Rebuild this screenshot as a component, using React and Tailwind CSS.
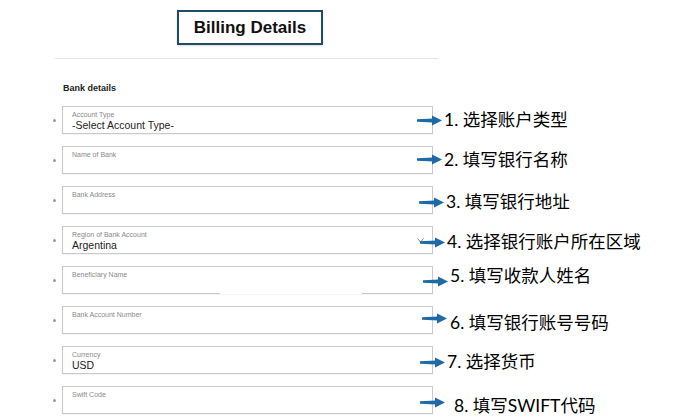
import React from "react";

const fields = [
  { label: "Account Type", value: "-Select Account Type-", note: "1. 选择账户类型", arrow: "ml-[-16px]", arrowY: "", gap: "ml-[2px]", textY: "" },
  { label: "Name of Bank", value: "", note: "2. 填写银行名称", arrow: "ml-[-16px]", arrowY: "-translate-y-[1px]", gap: "ml-[2px]", textY: "" },
  { label: "Bank Address", value: "", note: "3. 填写银行地址", arrow: "ml-[-14px]", arrowY: "translate-y-[2px]", gap: "ml-[2px]", textY: "translate-y-[2px]" },
  { label: "Region of Bank Account", value: "Argentina", note: "4. 选择银行账户所在区域", arrow: "ml-[-13px]", arrowY: "translate-y-[2px]", gap: "ml-[2px]", textY: "translate-y-[2px]", chevron: true },
  { label: "Beneficiary Name", value: "", note: "5. 填写收款人姓名", arrow: "ml-[-10px]", arrowY: "translate-y-[1px]", gap: "ml-[2px]", textY: "-translate-y-[4px]", gapLine: true },
  { label: "Bank Account Number", value: "", note: "6. 填写银行账号号码", arrow: "ml-[-11px]", arrowY: "-translate-y-[2px]", gap: "ml-[3px]", textY: "translate-y-[3px]" },
  { label: "Currency", value: "USD", note: "7. 选择货币", arrow: "ml-[-13px]", arrowY: "translate-y-[2px]", gap: "ml-[2px]", textY: "translate-y-[2px]" },
  { label: "Swift Code", value: "", note: "8. 填写SWIFT代码", arrow: "ml-[-13px]", arrowY: "translate-y-[2px]", gap: "ml-[9px]", textY: "translate-y-[6px]" },
];

function Arrow() {
  return (
    <svg width="25" height="11" viewBox="0 0 25 11">
      <path d="M0 4.2 L16 3.6 L16 7.4 L0 6.8 Z" fill="#1e6aa6" />
      <path d="M15 0.5 L25 5.5 L15 10.5 Z" fill="#1e6aa6" />
    </svg>
  );
}

function Field({ f }) {
  return (
    <div className="flex items-center h-[28px]">
      <div className="w-[9px] flex justify-start">
        <div className="w-[3px] h-[3px] rounded-full bg-[#9a9a9a]"></div>
      </div>
      <div className="relative w-[371px] h-[28px] border border-[#c9c9c9] bg-white pl-[9px] pt-[4px] font-['Liberation_Sans',Arial,sans-serif] shadow-[0_1px_1px_rgba(0,0,0,0.04)]">
        <div className="text-[7px] leading-[8px] text-[#8a8a8a]">{f.label}</div>
        <div className="text-[10.5px] leading-[13px] text-[#222]">{f.value}</div>
        {f.chevron && (
          <svg className="absolute right-[8px] top-[11px]" width="7" height="5" viewBox="0 0 7 5">
            <polyline points="0.5,0.5 3.5,4 6.5,0.5" fill="none" stroke="#8a8a8a" strokeWidth="1" />
          </svg>
        )}
        {f.gapLine && <div className="absolute left-[157px] bottom-[-1px] w-[142px] h-[2px] bg-white"></div>}
      </div>
      <div className={"relative z-10 flex items-center " + f.arrow}>
        <div className={f.arrowY}>
          <Arrow />
        </div>
        <div className={"text-[17.5px] leading-[22px] text-black whitespace-nowrap font-['Lato','Noto_Sans_CJK_SC',sans-serif] " + f.gap + " " + f.textY}>
          {f.note}
        </div>
      </div>
    </div>
  );
}

export default function App() {
  return (
    <div className="w-[700px] h-[419px] bg-white overflow-hidden font-['Liberation_Sans',Arial,sans-serif]">
      <div className="pl-[177px] pt-[10px]">
        <div className="w-[146px] h-[35px] border-2 border-[#1d4c64] flex items-center justify-center text-[17px] font-bold text-[#111] shadow-[0_1px_2px_rgba(0,0,0,0.15)]">
          Billing Details
        </div>
      </div>
      <div className="ml-[55px] mt-[13px] w-[383px] h-px bg-[#e4e4e4]"></div>
      <div className="ml-[63px] mt-[23px] text-[9px] leading-[12px] font-semibold text-[#222]">Bank details</div>
      <div className="pl-[53px] mt-[12px] flex flex-col gap-[12px]">
        {fields.map((f) => (
          <Field key={f.label} f={f} />
        ))}
      </div>
    </div>
  );
}
